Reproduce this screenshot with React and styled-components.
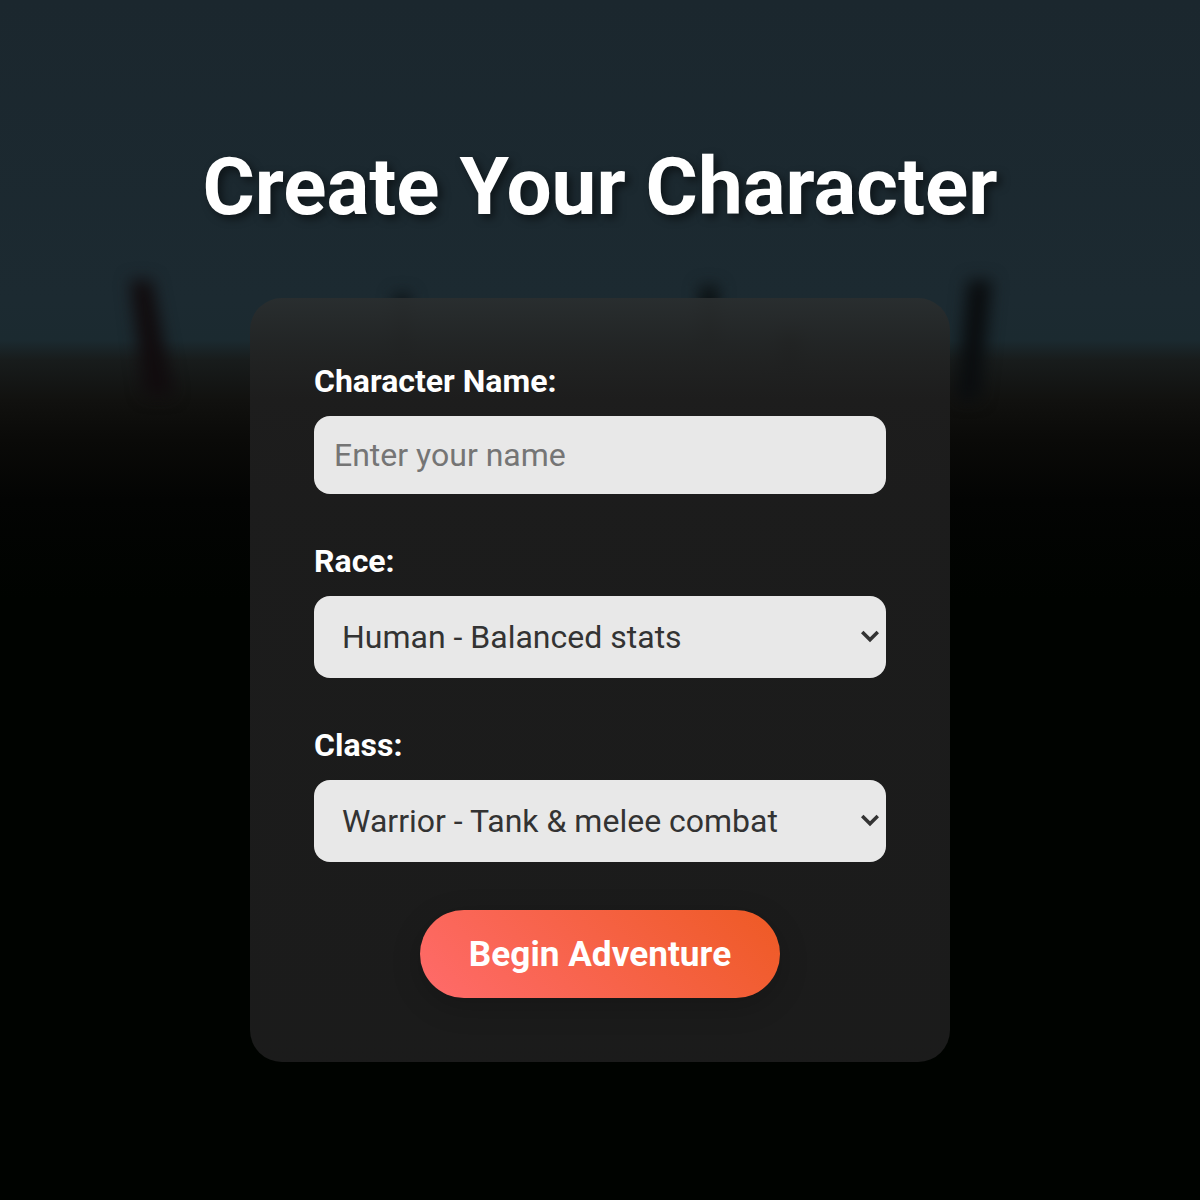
import React from 'react';
import styled, { createGlobalStyle } from 'styled-components';

const Global = createGlobalStyle`
  html { zoom: 2; }
  html, body { margin: 0; padding: 0; background: #000; }
  * { box-sizing: border-box; }
`;

const Page = styled.main`
  position: relative;
  width: 600px;
  height: 600px;
  overflow: hidden;
  display: flex;
  flex-direction: column;
  align-items: center;
  padding-top: 72.5px;
  font-family: Roboto, "Liberation Sans", sans-serif;
  background: linear-gradient(180deg, #1b272e 0px, #1c2a31 150px, #1b2a30 170px, #181c1c 180px, #11110f 200px, #0a0a08 220px, #030403 250px, #000300 300px, #000300 600px);
`;

const Scene = styled.svg`
  position: absolute;
  inset: 0;
  width: 600px;
  height: 600px;
  filter: blur(4px);
`;

const Title = styled.h1`
  position: relative;
  margin: 0 0 34.5px;
  font-size: 40px;
  line-height: 42px;
  font-weight: 700;
  color: #fff;
  text-shadow: 2px 2px 4px rgba(0, 0, 0, 0.5);
`;

const Card = styled.form`
  position: relative;
  width: 350px;
  height: 382px;
  padding: 32px;
  border-radius: 16px;
  background: linear-gradient(180deg, rgba(42, 46, 47, 0.93) 0px, rgba(35, 37, 37, 0.93) 22px, rgba(30, 30, 30, 0.93) 50px, rgba(29, 29, 29, 0.93) 100%);
  display: flex;
  flex-direction: column;
`;

const Field = styled.div`
  display: flex;
  flex-direction: column;
  margin-bottom: 24px;
`;

const Label = styled.label`
  font-size: 16px;
  line-height: 19px;
  font-weight: 700;
  color: #fff;
  margin-bottom: 8px;
`;

const TextInput = styled.input`
  width: 100%;
  height: 39px;
  padding: 10px;
  border: 0;
  border-radius: 8px;
  background: #e8e8e8;
  color: #333;
  font: 400 16px Roboto, sans-serif;
  &::placeholder { color: #757575; opacity: 1; }
`;

const SelectWrap = styled.div`
  position: relative;
`;

const Select = styled.select`
  display: block;
  width: 100%;
  height: 41px;
  padding: 10px 24px 10px 14px;
  appearance: none;
  border: 0;
  border-radius: 8px;
  background-color: #e8e8e8;
  color: #333;
  font: 400 16px Roboto, sans-serif;
`;

const Chevron = styled.svg`
  position: absolute;
  top: 17px;
  right: 3.5px;
  width: 9px;
  height: 7px;
  pointer-events: none;
`;

const Submit = styled.button`
  align-self: center;
  width: 180px;
  height: 44px;
  border: 0;
  border-radius: 22px;
  background: linear-gradient(45deg, #ff6b6b, #ee5a24);
  color: #fff;
  font: 700 17.6px Roboto, sans-serif;
  box-shadow: 0 4px 15px rgba(0, 0, 0, 0.2);
`;

const Arrow = () => (
  <Chevron viewBox="0 0 9 7" aria-hidden="true">
    <path d="M0.6 1 L4.5 4.9 L8.4 1" fill="none" stroke="#333" strokeWidth="1.8" />
  </Chevron>
);

export default function App() {
  return (
    <Page>
      <Global />
      <Scene viewBox="0 0 600 600" aria-hidden="true">
        <path d="M65 140 L76 140 L87 198 L72 198 Z" fill="#110c0e" />
        <path d="M484 140 L496 140 L490 200 L478 200 Z" fill="#0a0d0f" />
        <path d="M350 143 L359 143 L359 172 L350 172 Z" fill="#0a0f10" />
        <path d="M197 147 L205 147 L205 182 L197 182 Z" fill="#0b1114" />
        <path d="M390 165 L400 165 L400 186 L390 186 Z" fill="#080a0b" />
      </Scene>
      <Title>Create Your Character</Title>
      <Card>
        <Field>
          <Label htmlFor="name">Character Name:</Label>
          <TextInput id="name" placeholder="Enter your name" />
        </Field>
        <Field>
          <Label htmlFor="race">Race:</Label>
          <SelectWrap>
            <Select id="race" defaultValue="human">
              <option value="human">Human - Balanced stats</option>
            </Select>
            <Arrow />
          </SelectWrap>
        </Field>
        <Field>
          <Label htmlFor="class">Class:</Label>
          <SelectWrap>
            <Select id="class" defaultValue="warrior">
              <option value="warrior">Warrior - Tank &amp; melee combat</option>
            </Select>
            <Arrow />
          </SelectWrap>
        </Field>
        <Submit type="button">Begin Adventure</Submit>
      </Card>
    </Page>
  );
}
